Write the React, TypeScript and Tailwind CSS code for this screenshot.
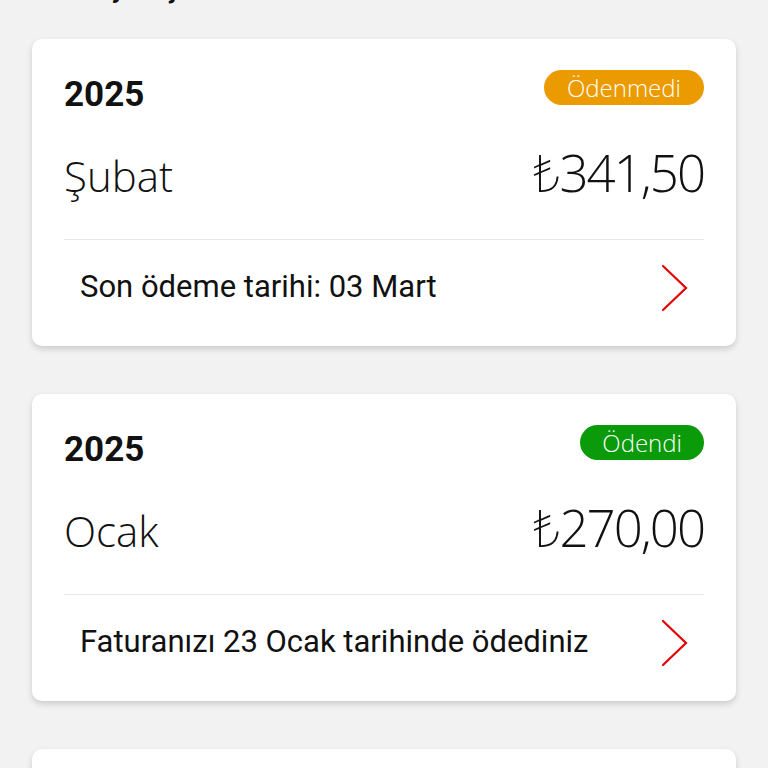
import React from "react";

interface Bill {
  year: string;
  month: string;
  amount: string;
  paid: boolean;
  note: string;
}

const bills: Bill[] = [
  { year: "2025", month: "Şubat", amount: "341,50", paid: false, note: "Son ödeme tarihi: 03 Mart" },
  { year: "2025", month: "Ocak", amount: "270,00", paid: true, note: "Faturanızı 23 Ocak tarihinde ödediniz" },
  { year: "2024", month: "Aralık", amount: "255,00", paid: true, note: "Faturanızı 22 Aralık tarihinde ödediniz" },
];

const Chevron: React.FC = () => (
  <svg width="30" height="48" viewBox="0 0 30 48" fill="none">
    <path d="M3 2 L26 24 L3 46" stroke="#e60000" strokeWidth="2.2" strokeLinecap="round" strokeLinejoin="miter" />
  </svg>
);

const BillCard: React.FC<{ bill: Bill }> = ({ bill }) => (
  <div className="bg-white rounded-[10px] shadow-[0_3px_6px_rgba(0,0,0,0.16)] px-8 pt-[31px] pb-[11px]">
    <div className="flex justify-between items-start">
      <span className="mt-[5px] text-[35px] leading-[40px] font-bold text-[#111] font-['Roboto',sans-serif]">
        {bill.year}
      </span>
      <span
        className={
          "h-[35px] rounded-full flex items-center justify-center text-white text-[24px] font-light font-['Open_Sans',sans-serif] " +
          (bill.paid ? "bg-[#0a9a0a] px-[22px]" : "bg-[#eb9b00] px-[23px]")
        }
      >
        {bill.paid ? "Ödendi" : "Ödenmedi"}
      </span>
    </div>
    <div className="flex justify-between items-center mt-[27px] h-[60px] font-['Open_Sans',sans-serif] font-light text-[#111]">
      <span className="text-[42px] leading-none mt-[8px]">{bill.month}</span>
      <span className="text-[51px] leading-none tracking-[-2px]">
        <span className="font-['Noto_Sans',sans-serif] font-extralight">₺</span>
        {bill.amount}
      </span>
    </div>
    <div className="mt-[37px] border-t border-[#e6e6e6]" />
    <div className="flex justify-between items-center pl-4 pr-[14px] h-[95px]">
      <span className="text-[31px] text-[#111] font-['Roboto',sans-serif]">{bill.note}</span>
      <Chevron />
    </div>
  </div>
);

const App: React.FC = () => {
  return (
    <div className="h-[768px] overflow-hidden bg-[#f2f2f2] px-8">
      <h1 className="mt-[-36px] pl-[32px] text-[34px] leading-[40px] font-bold text-[#111] font-['Roboto',sans-serif]">
        Geçmiş faturalar
      </h1>
      <div className="mt-[35px] flex flex-col gap-[48px]">
        {bills.map((b, i) => (
          <BillCard key={i} bill={b} />
        ))}
      </div>
    </div>
  );
};

export default App;
